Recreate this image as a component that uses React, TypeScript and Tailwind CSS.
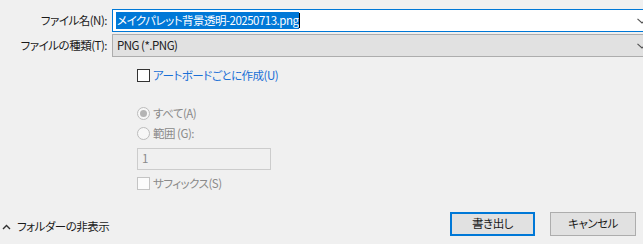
import React from "react";

const Chevron = () => (
  <svg width="10" height="6" viewBox="0 0 10 6" className="shrink-0">
    <path d="M0.5 0.8 L5 5 L9.5 0.8" fill="none" stroke="#505050" strokeWidth="1.1" />
  </svg>
);

export default function App() {
  const font = {
    fontFamily: '"Noto Sans CJK JP", "Noto Sans", sans-serif',
  };
  return (
    <div
      className="w-[643px] h-[244px] bg-[#f0f0f0] text-[11.5px] tracking-[-0.5px] text-[#1a1a1a] flex flex-col overflow-hidden leading-none [font-feature-settings:'palt']"
      style={font}
    >
      {/* Filename row */}
      <div className="flex items-center mt-[9px]">
        <div className="w-[112px] pr-[5px] text-right">ファイル名(N):</div>
        <div className="flex-1 h-[23px] bg-white border border-[#0078d7] border-r-0 flex items-center justify-between pl-[3px] pr-[0px]">
          <div className="flex items-center">
            <span className="bg-[#0078d7] text-white px-[1px] h-[17px] flex items-center">
              メイクパレット背景透明-20250713.png
            </span>
            <span className="w-[1px] h-[15px] bg-[#000]" />
          </div>
          <div className="mr-[-4px]">
            <Chevron />
          </div>
        </div>
      </div>
      {/* Type row */}
      <div className="flex items-center mt-[2px]">
        <div className="w-[112px] pr-[5px] text-right">ファイルの種類(T):</div>
        <div className="flex-1 h-[23px] bg-[#e1e1e1] border border-[#adadad] border-r-0 flex items-center justify-between pl-[4px]">
          <span>PNG (*.PNG)</span>
          <div className="mr-[-4px]">
            <Chevron />
          </div>
        </div>
      </div>
      {/* Artboard checkbox */}
      <div className="flex items-center mt-[12px] pl-[137px] h-[13px]">
        <div className="w-[13px] h-[13px] border border-[#333] bg-white" />
        <span className="ml-[3px] text-[#1a6fd6]">アートボードごとに作成(U)</span>
      </div>
      {/* Radio all */}
      <div className="flex items-center mt-[25px] pl-[137px] h-[13px] text-[#8a8a8a]">
        <div className="w-[13px] h-[13px] rounded-full border border-[#bcbcbc] bg-[#f7f7f7] flex items-center justify-center">
          <div className="w-[7px] h-[7px] rounded-full bg-[#b4b4b4]" />
        </div>
        <span className="ml-[3px]">すべて(A)</span>
      </div>
      {/* Radio range */}
      <div className="flex items-center mt-[7px] pl-[137px] h-[13px] text-[#8a8a8a]">
        <div className="w-[13px] h-[13px] rounded-full border border-[#bcbcbc] bg-[#f7f7f7]" />
        <span className="ml-[3px]">範囲 (G):</span>
      </div>
      {/* Range input */}
      <div className="mt-[8px] ml-[137px] w-[134px] h-[22px] border border-[#cccccc] bg-[#f0f0f0] flex items-center pl-[4px] text-[#8a8a8a]">
        1
      </div>
      {/* Suffix checkbox */}
      <div className="flex items-center mt-[7px] pl-[137px] h-[13px] text-[#8a8a8a]">
        <div className="w-[13px] h-[13px] border border-[#c4c4c4] bg-[#fbfbfb]" />
        <span className="ml-[3px]">サフィックス(S)</span>
      </div>
      {/* Bottom row */}
      <div className="flex items-center mt-[22px] h-[24px]">
        <div className="flex items-center pl-[2px] mt-[5px]">
          <svg width="9" height="6" viewBox="0 0 9 6">
            <path d="M1 5 L4.5 1.5 L8 5" fill="none" stroke="#303030" strokeWidth="1.4" />
          </svg>
          <span className="ml-[6px]">フォルダーの非表示</span>
        </div>
        <div className="flex-1" />
        <button className="w-[85px] h-[24px] border-2 border-[#0078d7] bg-[#e1e1e1] flex items-center justify-center text-[#1a1a1a]">
          書き出し
        </button>
        <button className="ml-[15px] mr-[7px] w-[86px] h-[24px] border border-[#adadad] bg-[#e1e1e1] flex items-center justify-center text-[#1a1a1a]">
          キャンセル
        </button>
      </div>
    </div>
  );
}
